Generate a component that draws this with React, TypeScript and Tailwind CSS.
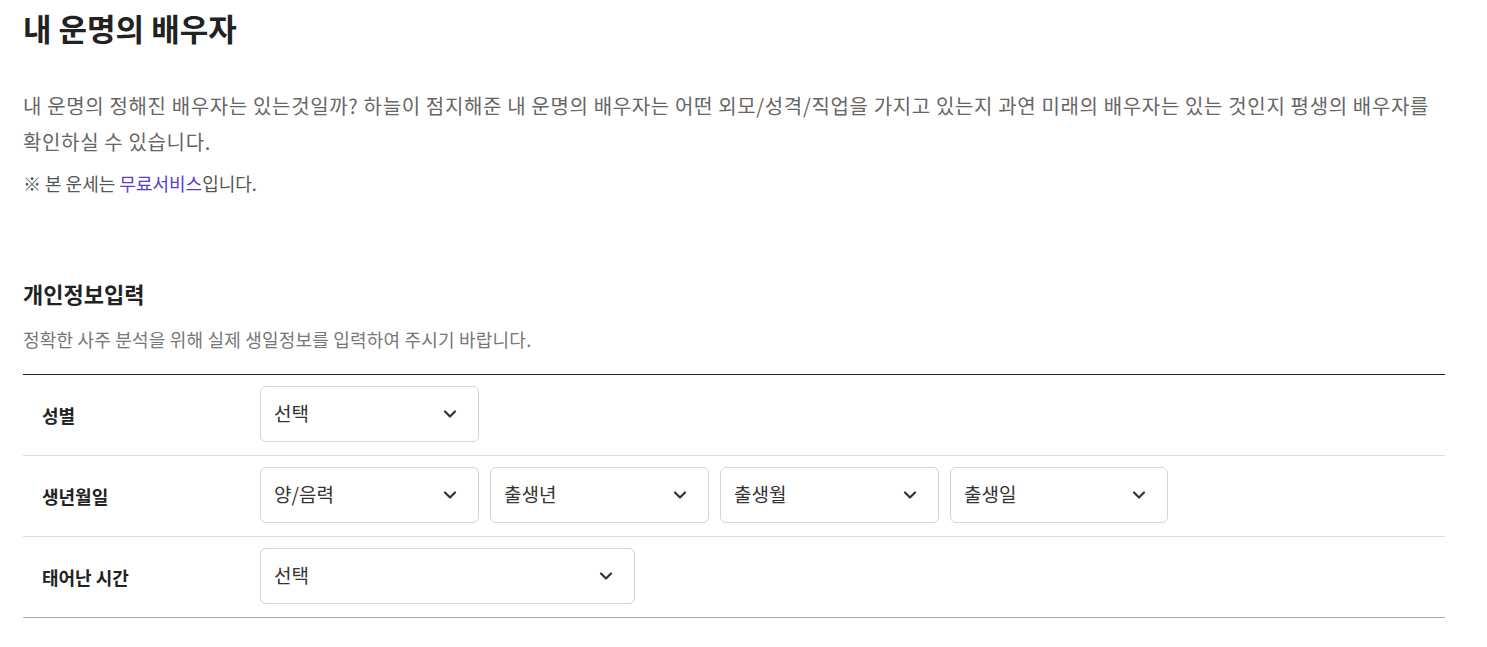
import { ChevronDown } from 'lucide-react'

const font = { fontFamily: '"Noto Sans CJK KR", "Noto Sans", sans-serif' }

function Select({ label, width }: { label: string; width: string }) {
  return (
    <div
      className={`flex h-[56px] ${width} items-center justify-between rounded-[6px] border border-[#d4d4d4] bg-white pl-[13px] pr-[18px]`}
    >
      <span className="text-[19px] text-[#333]">{label}</span>
      <ChevronDown className="h-[20px] w-[20px] text-[#333]" strokeWidth={2.6} />
    </div>
  )
}

function Row({ label, children, last }: { label: string; children: React.ReactNode; last?: boolean }) {
  return (
    <div
      className={`flex h-[81px] items-center pb-[3px] border-b ${last ? 'border-[#a8a8a8]' : 'border-[#dedede]'}`}
    >
      <div className="w-[237px] pl-[19px] pt-[4px] text-[18px] font-bold text-[#222]">{label}</div>
      <div className="flex gap-[11px]">{children}</div>
    </div>
  )
}

export default function App() {
  return (
    <div className="min-h-screen bg-white" style={font}>
      <div className="w-[1445px] pl-[23px] pt-[6px]">
        <h1 className="text-[31px] font-bold leading-[44px] text-[#222]">내 운명의 배우자</h1>

        <p className="mt-[38px] break-keep text-[20px] leading-[36px] tracking-[0.65px] text-[#666]">
          내 운명의 정해진 배우자는 있는것일까? 하늘이 점지해준 내 운명의 배우자는 어떤 외모/성격/직업을 가지고 있는지 과연 미래의 배우자는 있는 것인지 평생의 배우자를 확인하실 수 있습니다.
        </p>
        <p className="mt-[9px] text-[18px] leading-[28px] text-[#555]">
          ※ 본 운세는 <span className="text-[#5b3ccf]">무료서비스</span>입니다.
        </p>

        <h2 className="mt-[80px] text-[22px] font-bold leading-[32px] text-[#222]">개인정보입력</h2>
        <p className="mt-[17px] text-[18px] leading-[26px] tracking-[0.2px] text-[#777]">
          정확한 사주 분석을 위해 실제 생일정보를 입력하여 주시기 바랍니다.
        </p>

        <div className="mt-[22px] border-t border-[#222]">
          <Row label="성별">
            <Select label="선택" width="w-[219px]" />
          </Row>
          <Row label="생년월일">
            <Select label="양/음력" width="w-[219px]" />
            <Select label="출생년" width="w-[219px]" />
            <Select label="출생월" width="w-[219px]" />
            <Select label="출생일" width="w-[218px]" />
          </Row>
          <Row label="태어난 시간" last>
            <Select label="선택" width="w-[375px]" />
          </Row>
        </div>
      </div>
    </div>
  )
}
